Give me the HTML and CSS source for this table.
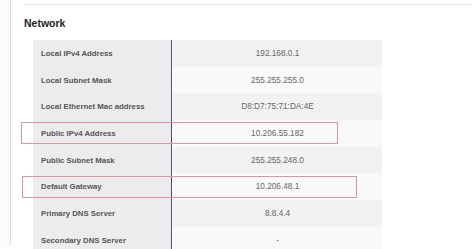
FILE: index.html
```html
<!DOCTYPE html>
<html>
<head>
<meta charset="utf-8">
<link rel="stylesheet" href="styles.css">
</head>
<body>
<div class="page">
  <div class="gutter"></div>
  <div class="panel">
    <div class="rule"></div>
    <h2 class="title">Network</h2>
    <div class="table">
      <div class="row odd"><div class="label">Local IPv4 Address</div><div class="value">192.168.0.1</div></div>
      <div class="row even"><div class="label">Local Subnet Mask</div><div class="value">255.255.255.0</div></div>
      <div class="row odd"><div class="label">Local Ethernet Mac address</div><div class="value">D8:D7:75:71:DA:4E</div></div>
      <div class="row even"><div class="label">Public IPv4 Address</div><div class="value">10.206.55.182</div></div>
      <div class="row odd"><div class="label">Public Subnet Mask</div><div class="value">255.255.248.0</div></div>
      <div class="row even"><div class="label">Default Gateway</div><div class="value">10.206.48.1</div></div>
      <div class="row odd"><div class="label">Primary DNS Server</div><div class="value">8.8.4.4</div></div>
      <div class="row even"><div class="label">Secondary DNS Server</div><div class="value">-</div></div>
    </div>
    <div class="mark mark-ip"></div>
    <div class="mark mark-gw"></div>
  </div>
</div>
</body>
</html>
```
FILE: styles.css
```css
html, body {
  margin: 0;
  padding: 0;
  background: #ffffff;
  overflow: hidden;
}
.page {
  display: flex;
  width: 474px;
  height: 249px;
  font-family: "Liberation Sans", Arial, sans-serif;
}
.gutter {
  width: 10px;
  background: #fbfbfb;
  border-right: 1px solid #dcdcdc;
  border-bottom-right-radius: 4px;
  height: 247px;
}
.panel {
  position: relative;
  flex: 1;
  padding-left: 13px;
}
.rule {
  margin-top: 4px;
  height: 1px;
  background: #e2e2e2;
  margin-right: 2px;
}
.title {
  margin: 0;
  font-size: 10.5px;
  line-height: 13px;
  font-weight: bold;
  color: #222;
  box-sizing: border-box;
  padding-top: 12px;
  height: 35px;
}
.table {
  margin-left: 9px;
  width: 349px;
}
.row {
  display: grid;
  grid-template-columns: 139px 1px 209px;
  height: 26.7px;
}
.label {
  background: #ececec;
  color: #555;
  font-weight: bold;
  font-size: 7.8px;
  display: flex;
  align-items: center;
  padding-left: 8px;
  border-right: 1px solid #4c4a7c;
}
.value {
  grid-column: 3;
  display: flex;
  align-items: center;
  justify-content: center;
  font-size: 8.25px;
  color: #666;
}
.odd .value { background: #f2f2f2; }
.even .value { background: #f9f9f9; }
.mark {
  position: absolute;
  border: 1.5px solid #e8929a;
  box-sizing: border-box;
}
.mark-ip {
  left: 10px;
  top: 122px;
  width: 317px;
  height: 22px;
}
.mark-gw {
  left: 11px;
  top: 176px;
  width: 335px;
  height: 22px;
}
```
